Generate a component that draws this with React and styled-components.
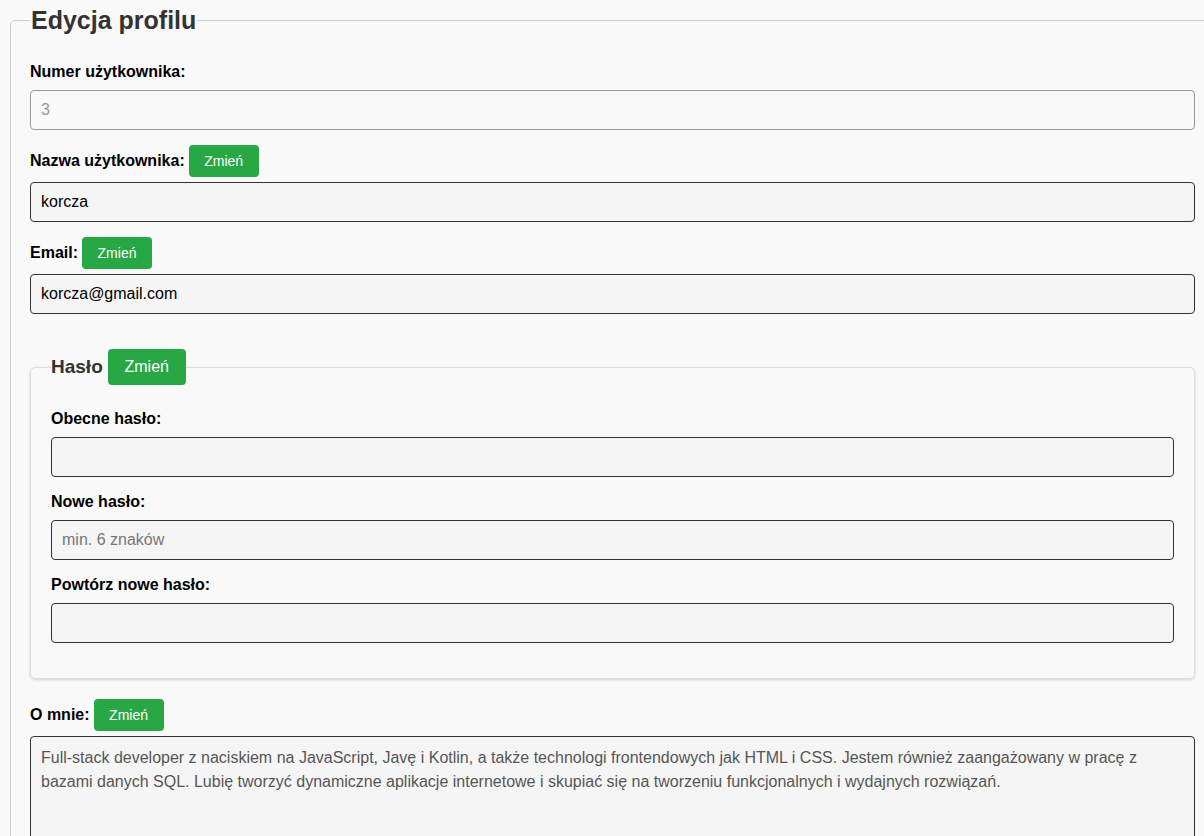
import React, { useState } from 'react';
import styled, { createGlobalStyle } from 'styled-components';

const GlobalStyle = createGlobalStyle`
  html, body {
    margin: 0;
    padding: 0;
    background-color: #f9f9f9;
    font-family: "Liberation Sans", Arial, sans-serif;
    overflow: hidden;
  }
`;

const Page = styled.div`
  padding: 6px 0 0 10px;
  width: 1206px;
`;

const Form = styled.fieldset`
  margin: 0;
  padding: 27px 20px 20px 19px;
  border: 1px solid #ccc;
  border-radius: 5px;
  min-width: 0;
`;

const Title = styled.legend`
  font-size: 25px;
  font-weight: bold;
  color: #333;
  padding: 0 1px;
`;

const Group = styled.div`
  display: flex;
  flex-direction: column;
  margin-bottom: 15px;
`;

const LabelRow = styled.div`
  display: flex;
  align-items: center;
  gap: 4px;
  min-height: ${p => (p.$withButton ? '32px' : '20px')};
  margin-bottom: ${p => (p.$withButton ? '5px' : '8px')};
`;

const Label = styled.label`
  font-size: 16px;
  font-weight: bold;
  color: #000;
`;

const ChangeButton = styled.button`
  background-color: #28a745;
  color: #fff;
  border: none;
  border-radius: 4px;
  font-family: inherit;
  font-size: ${p => (p.$large ? '16px' : '14px')};
  height: ${p => (p.$large ? '36px' : '32px')};
  width: ${p => (p.$large ? '78px' : '70px')};
  padding: 0;
  cursor: pointer;
`;

const Input = styled.input`
  box-sizing: border-box;
  width: 100%;
  height: 40px;
  padding: 0 10px;
  font-family: inherit;
  font-size: 16px;
  color: #000;
  background-color: #f5f5f5;
  border: 1px solid #333;
  border-radius: 4px;
  outline: none;

  &:disabled {
    color: #999;
    border-color: #9a9a9a;
    background-color: #f9f9f9;
  }

  &::placeholder {
    color: #777;
  }
`;

const TextArea = styled.textarea`
  box-sizing: border-box;
  width: 100%;
  height: 160px;
  padding: 9px 10px;
  font-family: inherit;
  font-size: 16px;
  line-height: 24px;
  color: #555;
  background-color: #f5f5f5;
  border: 1px solid #333;
  border-radius: 4px;
  resize: none;
  outline: none;
`;

const PasswordBox = styled.fieldset`
  margin: 35px 0 20px 0;
  padding: 24px 20px 20px 20px;
  border: 1px solid #ddd;
  border-radius: 5px;
  box-shadow: 0 1px 3px rgba(0, 0, 0, 0.15);
  min-width: 0;
`;

const PasswordLegend = styled.legend`
  display: flex;
  align-items: center;
  gap: 5px;
  padding: 0;
  font-size: 19px;
  font-weight: bold;
  color: #333;
`;

const about =
  'Full-stack developer z naciskiem na JavaScript, Javę i Kotlin, a także technologi frontendowych jak HTML i CSS. Jestem również zaangażowany w pracę z bazami danych SQL. Lubię tworzyć dynamiczne aplikacje internetowe i skupiać się na tworzeniu funkcjonalnych i wydajnych rozwiązań.';

const Field = ({ label, withButton, children }) => (
  <Group>
    <LabelRow $withButton={withButton}>
      <Label>{label}</Label>
      {withButton && <ChangeButton type="button">Zmień</ChangeButton>}
    </LabelRow>
    {children}
  </Group>
);

const App = () => {
  const [username, setUsername] = useState('korcza');
  const [email, setEmail] = useState('korcza@gmail.com');
  const [bio, setBio] = useState(about);

  return (
    <Page>
      <GlobalStyle />
      <Form>
        <Title>Edycja profilu</Title>

        <Field label="Numer użytkownika:">
          <Input value="3" disabled readOnly />
        </Field>

        <Field label="Nazwa użytkownika:" withButton>
          <Input value={username} onChange={e => setUsername(e.target.value)} />
        </Field>

        <Field label="Email:" withButton>
          <Input value={email} onChange={e => setEmail(e.target.value)} />
        </Field>

        <PasswordBox>
          <PasswordLegend>
            <span>Hasło</span>
            <ChangeButton type="button" $large>Zmień</ChangeButton>
          </PasswordLegend>

          <Field label="Obecne hasło:">
            <Input type="password" />
          </Field>
          <Field label="Nowe hasło:">
            <Input type="password" placeholder="min. 6 znaków" />
          </Field>
          <Field label="Powtórz nowe hasło:">
            <Input type="password" />
          </Field>
        </PasswordBox>

        <Field label="O mnie:" withButton>
          <TextArea value={bio} onChange={e => setBio(e.target.value)} />
        </Field>
      </Form>
    </Page>
  );
};

export default App;
